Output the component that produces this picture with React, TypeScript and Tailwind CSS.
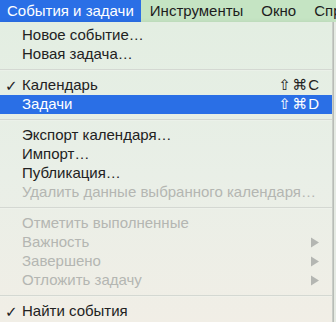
type Item = {
  label: string;
  checked?: boolean;
  shortcut?: string;
  disabled?: boolean;
  submenu?: boolean;
  active?: boolean;
};

type Entry = Item | "sep";

const entries: Entry[] = [
  { label: "Новое событие…" },
  { label: "Новая задача…" },
  "sep",
  { label: "Календарь", checked: true, shortcut: "⇧⌘C" },
  { label: "Задачи", shortcut: "⇧⌘D", active: true },
  "sep",
  { label: "Экспорт календаря…" },
  { label: "Импорт…" },
  { label: "Публикация…" },
  { label: "Удалить данные выбранного календаря…", disabled: true },
  "sep",
  { label: "Отметить выполненные", disabled: true },
  { label: "Важность", disabled: true, submenu: true },
  { label: "Завершено", disabled: true, submenu: true },
  { label: "Отложить задачу", disabled: true, submenu: true },
  "sep",
  { label: "Найти события", checked: true },
];

const barItems = ["Инструменты", "Окно", "Справка"];

function MenuRow({ item }: { item: Item }) {
  const color = item.active
    ? "bg-[#2a6fe6] text-white"
    : item.disabled
    ? "text-[#b4b6b2]"
    : "text-[#222222]";
  return (
    <div className={`flex h-[19px] items-center pr-3 ${color}`}>
      <span className="w-[22px] shrink-0 pl-[5px] text-[15px] font-bold leading-none">
        {item.checked ? "✓" : ""}
      </span>
      <span className="flex-1 whitespace-nowrap">{item.label}</span>
      {item.shortcut && (
        <span className="whitespace-nowrap tracking-[1px]">{item.shortcut}</span>
      )}
      {item.submenu && (
        <svg width="10" height="11" viewBox="0 0 10 11">
          <path d="M1 0.5 L9 5.5 L1 10.5 Z" fill="#b4b6b2" />
        </svg>
      )}
    </div>
  );
}

export default function App() {
  return (
    <div
      className="relative h-[322px] w-[336px] overflow-hidden bg-[#dfe7de] text-[15px]"
      style={{ fontFamily: '"Liberation Sans", "DejaVu Sans", sans-serif' }}
    >
      {/* Menu bar */}
      <div className="flex h-[22px] items-center overflow-hidden whitespace-nowrap bg-[#c5e4c3] text-[#1d1d1d]">
        <div className="flex h-full shrink-0 items-center bg-[#2a6fe6] px-[7px] text-white">
          События и задачи
        </div>
        {barItems.map((name) => (
          <div key={name} className="shrink-0 px-[9px]">
            {name}
          </div>
        ))}
      </div>

      {/* Dropdown */}
      <div className="flex">
        <div className="w-[333px] border-r border-[#c9cdc8] bg-gradient-to-b from-[#e3eee2] via-[#e9efe7] to-[#f1eee6] py-[4px] shadow-[0_2px_6px_rgba(0,0,0,0.15)]">
          {entries.map((e, i) =>
            e === "sep" ? (
              <div key={i} className="flex h-[12px] items-center">
                <div className="h-[2px] w-full border-t border-[#d4d8d2] bg-[#f2f5f1]/40" />
              </div>
            ) : (
              <MenuRow key={i} item={e} />
            )
          )}
        </div>
        <div className="flex-1 border-l border-[#b8bcb6] bg-[#e6ebe4]" />
      </div>
    </div>
  );
}
